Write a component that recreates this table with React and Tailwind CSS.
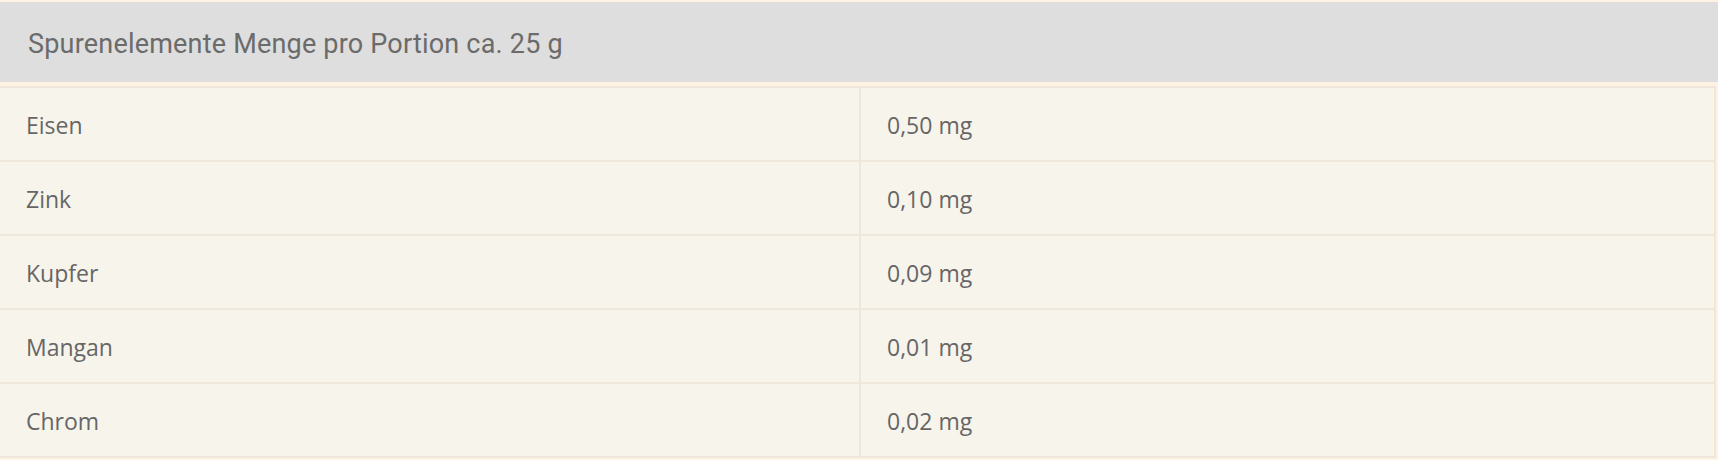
import React from 'react';

const rows = [
  { name: 'Eisen', value: '0,50 mg' },
  { name: 'Zink', value: '0,10 mg' },
  { name: 'Kupfer', value: '0,09 mg' },
  { name: 'Mangan', value: '0,01 mg' },
  { name: 'Chrom', value: '0,02 mg' },
];

const App = () => {
  return (
    <div className="w-[1718px] h-[460px] bg-[#fdf2e3] pt-[2px] overflow-hidden">
      <div className="h-[80px] bg-[#dedede] flex items-center pl-[28px] pt-[4px]">
        <h2 className="text-[27px] text-[#6b6b6b] font-['Roboto',sans-serif] tracking-[0.2px]">
          Spurenelemente Menge pro Portion ca. 25 g
        </h2>
      </div>
      <div className="mt-[4px] mr-[2px] border-t-2 border-r-2 border-[#efe8da] bg-[#f7f4ec] font-['Open_Sans',sans-serif] text-[23px] text-[#666666]">
        {rows.map((row) => (
          <div key={row.name} className="grid grid-cols-[861px_1fr] h-[74px] border-b-2 border-[#efe8da]">
            <div className="flex items-center pl-[26px] pt-[2px] border-r-2 border-[#efe8da]">{row.name}</div>
            <div className="flex items-center pl-[26px] pt-[2px]">{row.value}</div>
          </div>
        ))}
      </div>
    </div>
  );
};

export default App;
